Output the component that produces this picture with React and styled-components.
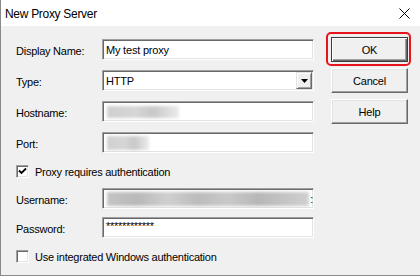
import React from 'react';
import styled, { createGlobalStyle } from 'styled-components';

const GlobalStyle = createGlobalStyle`
  html, body {
    margin: 0;
    padding: 0;
    background: #f0f0f0;
  }
  body {
    font-family: "Liberation Sans", Arial, sans-serif;
    color: #000;
  }
`;

const Window = styled.div`
  width: 420px;
  height: 276px;
  box-sizing: border-box;
  border-left: 1px solid #8a8a8a;
  border-bottom: 1px solid #8a8a8a;
  background: #f0f0f0;
  display: flex;
  flex-direction: column;
`;

const TitleBar = styled.div`
  height: 26px;
  flex: none;
  background: #fff;
  display: flex;
  align-items: center;
  justify-content: space-between;
  padding: 0 10px 0 4px;
`;

const Title = styled.span`
  font-size: 12px;
  letter-spacing: -0.3px;
  padding-top: 1px;
`;

const Body = styled.div`
  display: flex;
  padding: 11px 0 0 15px;
`;

const Form = styled.div`
  width: 298px;
  padding-top: 2px;
  display: flex;
  flex-direction: column;
`;

const Row = styled.div`
  display: flex;
  align-items: center;
  margin-top: ${p => p.gap || 0}px;
`;

const Label = styled.label`
  width: 86px;
  font-size: 11px;
  letter-spacing: -0.25px;
  padding-top: 3px;
`;

const Field = styled.div`
  position: relative;
  width: 212px;
  height: 21px;
  box-sizing: border-box;
  background: #fff;
  border: 1px solid;
  border-color: #a0a0a0 #fff #fff #a0a0a0;
  box-shadow: inset 1px 1px #696969, inset -1px -1px #e3e3e3;
  display: flex;
  align-items: center;
  padding-left: 3px;
  font-size: 11px;
  letter-spacing: -0.2px;
  overflow: hidden;
`;

const Masked = styled.span`
  font-size: 11px;
  letter-spacing: -0.3px;
  align-self: flex-start;
  padding-top: 2px;
`;

const Blur = styled.div`
  width: ${p => p.w}px;
  height: ${p => p.h || 12}px;
  margin-left: 1px;
  filter: blur(1.5px);
  background: ${p => p.dark
    ? 'linear-gradient(90deg, #c4c4c4 0%, #b9b9b9 15%, #cfcfcf 30%, #bcbcbc 45%, #c9c9c9 60%, #b7b7b7 75%, #d0d0d0 100%)'
    : 'linear-gradient(90deg, #cfcfcf 0%, #d6d6d6 40%, #c8c8c8 65%, #ececec 100%)'};
`;

const Tail = styled.span`
  margin-left: 1px;
  font-size: 11px;
`;

const DropButton = styled.div`
  margin-left: auto;
  margin-right: 1px;
  width: 16px;
  height: 17px;
  box-sizing: border-box;
  background: #f0f0f0;
  border: 1px solid;
  border-color: #e3e3e3 #696969 #696969 #e3e3e3;
  box-shadow: inset 1px 1px #fff, inset -1px -1px #a0a0a0;
  display: flex;
  align-items: center;
  justify-content: center;
`;

const CheckRow = styled.div`
  display: flex;
  align-items: center;
  gap: 6px;
  margin-top: ${p => p.gap || 0}px;
  font-size: 11px;
  letter-spacing: -0.25px;
`;

const Box = styled.div`
  width: 13px;
  height: 13px;
  box-sizing: border-box;
  background: #fff;
  border: 1px solid;
  border-color: #a0a0a0 #fff #fff #a0a0a0;
  box-shadow: inset 1px 1px #696969, inset -1px -1px #e3e3e3;
  display: flex;
  align-items: center;
  justify-content: center;
`;

const Buttons = styled.div`
  margin-left: 17px;
  display: flex;
  flex-direction: column;
  gap: 6px;
`;

const Button = styled.div`
  position: relative;
  width: 77px;
  height: 25px;
  box-sizing: border-box;
  background: #f0f0f0;
  border: 1px solid;
  border-color: ${p => p.primary ? '#3c3c3c' : '#fff #696969 #696969 #fff'};
  box-shadow: ${p => p.primary
    ? 'inset 1px 1px #fff, inset -1px -1px #696969, inset -2px -2px #a0a0a0'
    : 'inset -1px -1px #a0a0a0, inset 1px 1px #e3e3e3'};
  display: flex;
  align-items: center;
  justify-content: center;
  font-size: 11px;
  letter-spacing: -0.2px;
`;

const Highlight = styled.span`
  position: absolute;
  top: -6px;
  left: -6px;
  right: -4px;
  bottom: -5px;
  border: 2px solid #e8141b;
  border-radius: 5px;
  pointer-events: none;
`;

const CloseIcon = () => (
  <svg width="11" height="11" viewBox="0 0 11 11">
    <path d="M0.5 0.5 L10.5 10.5 M10.5 0.5 L0.5 10.5" stroke="#000" strokeWidth="1" fill="none" />
  </svg>
);

const CheckMark = () => (
  <svg width="9" height="9" viewBox="0 0 9 9">
    <path d="M1 3.5 L3.5 6 L8 1.5" stroke="#000" strokeWidth="1.8" fill="none" />
  </svg>
);

const Arrow = () => (
  <svg width="7" height="4" viewBox="0 0 7 4">
    <path d="M0 0 H7 L3.5 4 Z" fill="#000" />
  </svg>
);

export default function App() {
  return (
    <>
      <GlobalStyle />
      <Window>
        <TitleBar>
          <Title>New Proxy Server</Title>
          <CloseIcon />
        </TitleBar>
        <Body>
          <Form>
            <Row>
              <Label>Display Name:</Label>
              <Field>My test proxy</Field>
            </Row>
            <Row gap={10}>
              <Label>Type:</Label>
              <Field>
                HTTP
                <DropButton><Arrow /></DropButton>
              </Field>
            </Row>
            <Row gap={10}>
              <Label>Hostname:</Label>
              <Field><Blur w={72} /></Field>
            </Row>
            <Row gap={10}>
              <Label>Port:</Label>
              <Field><Blur w={42} h={14} /></Field>
            </Row>
            <CheckRow gap={12}>
              <Box><CheckMark /></Box>
              Proxy requires authentication
            </CheckRow>
            <Row gap={10}>
              <Label>Username:</Label>
              <Field><Blur dark w={203} h={14} /><Tail>:</Tail></Field>
            </Row>
            <Row gap={8}>
              <Label>Password:</Label>
              <Field><Masked>************</Masked></Field>
            </Row>
            <CheckRow gap={12}>
              <Box />
              Use integrated Windows authentication
            </CheckRow>
          </Form>
          <Buttons>
            <Button primary>
              OK
              <Highlight />
            </Button>
            <Button>Cancel</Button>
            <Button>Help</Button>
          </Buttons>
        </Body>
      </Window>
    </>
  );
}
